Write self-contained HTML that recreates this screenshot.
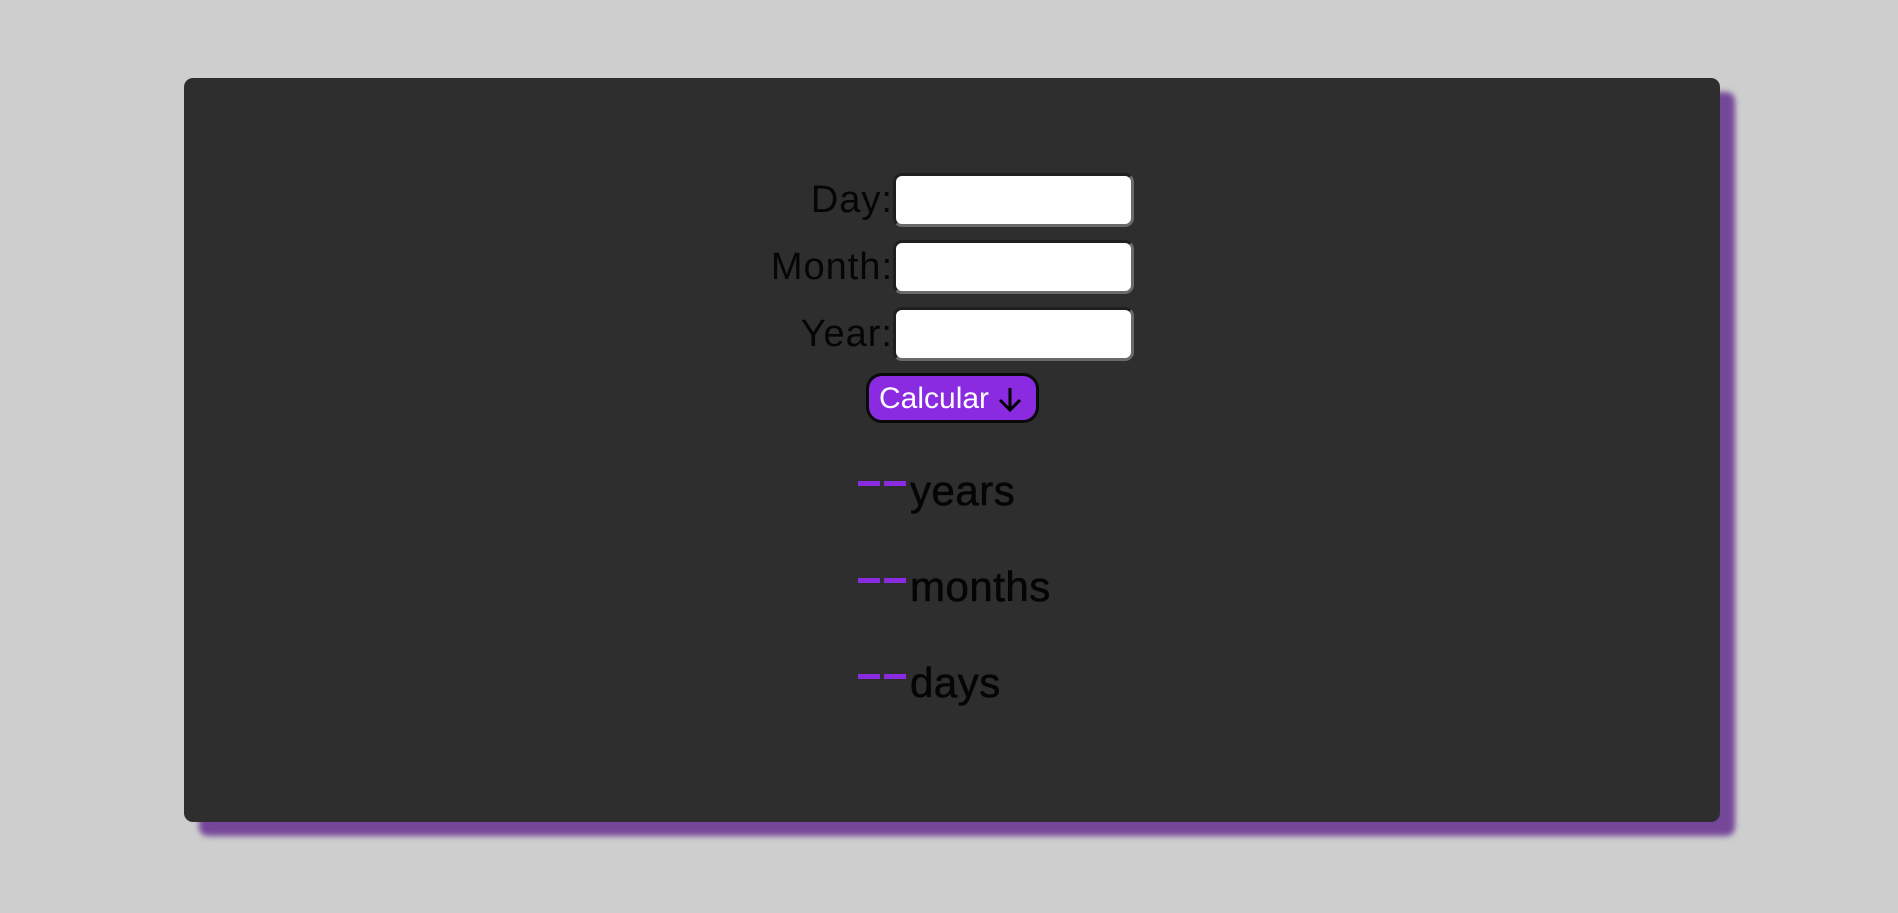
<!DOCTYPE html>
<html><head><meta charset="utf-8"><style>
html,body{margin:0;width:1898px;height:913px;background:#cecece;overflow:hidden;font-family:"Liberation Sans",sans-serif}
.card{position:absolute;left:184px;top:78px;width:1536px;height:744px;background:#2e2e2e;border-radius:9px;box-shadow:15px 14px 6px #754799}
.lab{position:absolute;right:1005px;font-size:38px;color:#050505;line-height:38px;letter-spacing:1px}
.inp{position:absolute;left:893px;width:235px;height:48px;background:#fff;border:3px solid #1f1f1f;border-right-color:#6a6a6a;border-bottom-color:#6a6a6a;border-radius:9px}
.btn{position:absolute;left:866px;top:373px;width:167px;height:44px;background:#8a2be2;border:3px solid #0a0a0a;border-radius:16px;color:#fff;font-size:30px;line-height:44px;box-sizing:content-box}
.dash{position:absolute;left:858px;width:22px;height:5px;background:#8a2be2}
.res{position:absolute;left:910px;font-size:42px;color:#050505;line-height:42px;-webkit-text-stroke:0.6px #050505;letter-spacing:0.5px}
</style></head><body>
<div class="card"></div>
<div class="lab" style="top:181px">Day:</div>
<div class="lab" style="top:248px">Month:</div>
<div class="lab" style="top:315px">Year:</div>
<div class="inp" style="top:173px"></div>
<div class="inp" style="top:240px"></div>
<div class="inp" style="top:307px"></div>
<div class="btn"><span style="position:absolute;left:10px;top:1px">Calcular</span>
<svg style="position:absolute;left:127px;top:9px" width="28" height="28" viewBox="0 0 28 28"><path d="M14 3V25M4 15L14 25L24 15" stroke="#000" stroke-width="3" fill="none"/></svg></div>
<div class="dash" style="top:481px"></div><div class="dash" style="top:481px;left:884px"></div>
<div class="dash" style="top:578px"></div><div class="dash" style="top:578px;left:884px"></div>
<div class="dash" style="top:674px"></div><div class="dash" style="top:674px;left:884px"></div>
<div class="res" style="top:470px">years</div>
<div class="res" style="top:566px">months</div>
<div class="res" style="top:662px">days</div>
</body></html>
